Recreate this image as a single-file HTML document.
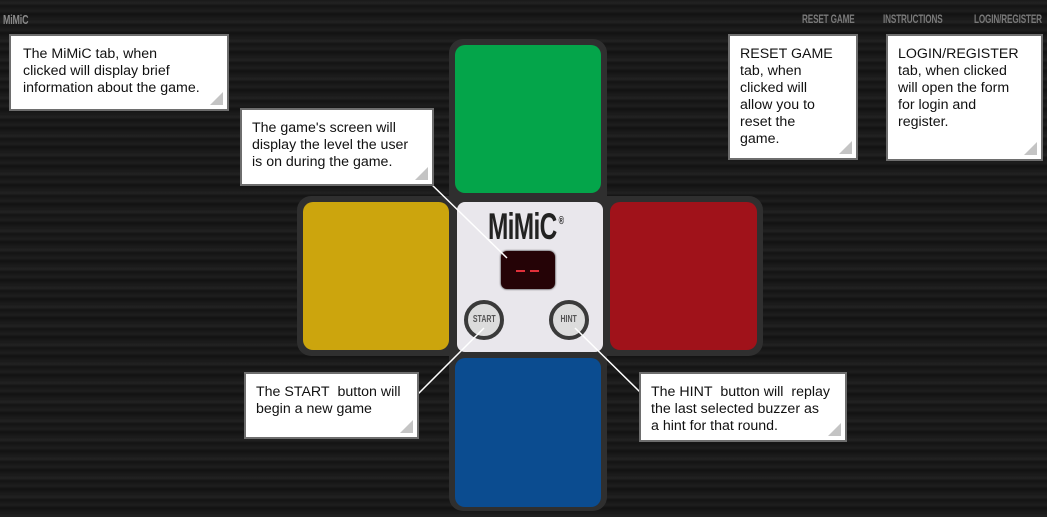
<!DOCTYPE html>
<html><head><meta charset="utf-8"><style>
*{margin:0;padding:0;box-sizing:border-box}
body{width:1047px;height:517px;overflow:hidden;position:relative;font-family:"Liberation Sans",sans-serif;
background:repeating-linear-gradient(180deg,#1a1a1a 0px,#222 3px,#141414 6px,#1e1e1e 11px,#121212 14px,#1c1c1c 19px);}
.nav{position:absolute;top:12px;font-family:"Liberation Sans Narrow","Liberation Sans",sans-serif;font-weight:bold;font-size:12px;color:#7a7a7a;transform:scaleX(.68);transform-origin:left top;letter-spacing:-.2px}
.box{position:absolute;background:#fff;border:2px solid #6e6e6e;color:#111;font-size:14.2px;line-height:17px;padding:8px 10px}
.box:after{content:"";position:absolute;right:4px;bottom:4px;border-left:13px solid transparent;border-bottom:13px solid #c4c4c4}
.frame{position:absolute;background:#2f2f2f;border-radius:14px}
.pad{position:absolute;border-radius:10px}
</style></head><body>
<div class="nav" style="left:3px;font-size:13px;color:#8a8a8a">MiMiC</div>
<div class="nav" style="left:802px">RESET GAME</div>
<div class="nav" style="left:883px">INSTRUCTIONS</div>
<div class="nav" style="left:974px">LOGIN/REGISTER</div>

<div class="frame" style="left:449px;top:39px;width:158px;height:472px"></div>
<div class="frame" style="left:297px;top:196px;width:466px;height:160px"></div>
<div class="pad" style="left:455px;top:45px;width:146px;height:148px;background:#04a54a"></div>
<div class="pad" style="left:303px;top:202px;width:146px;height:148px;background:#cca50d"></div>
<div class="pad" style="left:610px;top:202px;width:147px;height:148px;background:#a0121a"></div>
<div class="pad" style="left:455px;top:358px;width:146px;height:149px;background:#0b4c90"></div>
<div class="pad" style="left:457px;top:202px;width:146px;height:150px;background:#e9e7ec;border-radius:8px"></div>
<div style="position:absolute;left:488px;top:206px;font-size:37px;font-weight:bold;color:#222;transform:scaleX(.66);transform-origin:left top;letter-spacing:-1px">MiMiC<span style="font-size:11px;vertical-align:top;position:relative;top:9px;margin-left:3px">®</span></div>
<div style="position:absolute;left:501px;top:251px;width:54px;height:38px;background:#250306;border-radius:6px;box-shadow:0 0 2px #000"></div>
<div style="position:absolute;left:516px;top:270px;width:9px;height:2px;background:#e0303a"></div>
<div style="position:absolute;left:530px;top:270px;width:9px;height:2px;background:#e0303a"></div>
<div style="position:absolute;left:464px;top:300px;width:40px;height:40px;border-radius:50%;background:#dcdcdc;border:4px solid #3a3a3a;font-size:10px;font-weight:bold;color:#555;text-align:center;line-height:32px"><span style="display:inline-block;transform:scaleX(.7)">START</span></div>
<div style="position:absolute;left:549px;top:300px;width:40px;height:40px;border-radius:50%;background:#dcdcdc;border:4px solid #3a3a3a;font-size:10px;font-weight:bold;color:#555;text-align:center;line-height:32px"><span style="display:inline-block;transform:scaleX(.7)">HINT</span></div>

<svg style="position:absolute;left:0;top:0" width="1047" height="517">
<g stroke="#fff" stroke-width="1.5">
<line x1="428" y1="181" x2="507" y2="258"/>
<line x1="484" y1="328" x2="418" y2="394"/>
<line x1="575" y1="328" x2="641" y2="393"/>
</g></svg>

<div class="box" style="left:9px;top:34px;width:220px;height:77px;padding-left:12px;padding-top:10px">The MiMiC tab, when<br>clicked will display brief<br>information about the game.</div>
<div class="box" style="left:240px;top:108px;width:194px;height:78px;padding-left:10px;padding-top:10px">The game's screen will<br>display the level the user<br>is on during the game.</div>
<div class="box" style="left:728px;top:34px;width:130px;height:126px;padding-top:10px">RESET GAME<br>tab, when<br>clicked will<br>allow you to<br>reset the<br>game.</div>
<div class="box" style="left:886px;top:34px;width:157px;height:127px;padding-top:10px">LOGIN/REGISTER<br>tab, when clicked<br>will open the form<br>for login and<br>register.</div>
<div class="box" style="left:244px;top:372px;width:175px;height:67px;padding-top:10px">The START&nbsp; button will<br>begin a new game</div>
<div class="box" style="left:639px;top:372px;width:208px;height:70px;padding-top:10px">The HINT&nbsp; button will&nbsp; replay<br>the last selected buzzer as<br>a hint for that round.</div>
</body></html>
